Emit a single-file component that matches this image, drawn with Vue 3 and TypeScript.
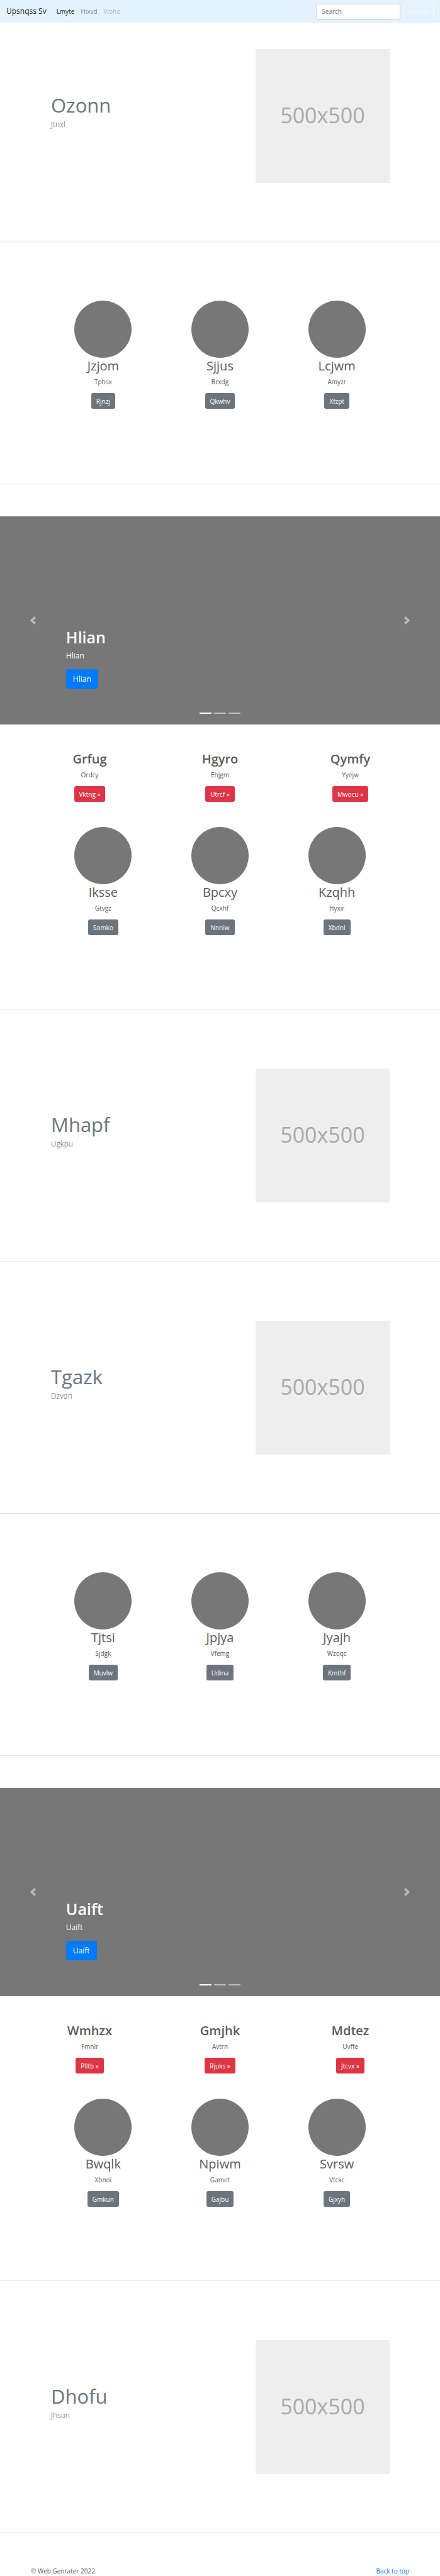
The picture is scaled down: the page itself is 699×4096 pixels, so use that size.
<script setup lang="ts">
import { ref } from 'vue'

interface Item {
  title: string
  text: string
  action: string
}

type Block =
  | { kind: 'feature'; title: string; text: string }
  | { kind: 'team'; items: Item[] }
  | { kind: 'showcase'; slide: string; links: Item[]; items: Item[] }

const item = (title: string, text: string, action: string): Item => ({ title, text, action })

const search = ref('')

const blocks: Block[] = [
  { kind: 'feature', title: 'Ozonn', text: 'Jtnxl' },
  {
    kind: 'team',
    items: [item('Jzjom', 'Tphsx', 'Rjnzj'), item('Sjjus', 'Brxdg', 'Qkwhv'), item('Lcjwm', 'Amyzr', 'Xfzpt')],
  },
  {
    kind: 'showcase',
    slide: 'Hlian',
    links: [item('Grfug', 'Ordcy', 'Vktng'), item('Hgyro', 'Ehjgm', 'Utrcf'), item('Qymfy', 'Yyejw', 'Mwocu')],
    items: [item('Iksse', 'Gtvgz', 'Somko'), item('Bpcxy', 'Qcxhf', 'Nnniw'), item('Kzqhh', 'Hyxir', 'Xbdnl')],
  },
  { kind: 'feature', title: 'Mhapf', text: 'Ugkpu' },
  { kind: 'feature', title: 'Tgazk', text: 'Dzvdn' },
  {
    kind: 'team',
    items: [item('Tjtsi', 'Sjdgk', 'Muvlw'), item('Jpjya', 'Vfemg', 'Udina'), item('Jyajh', 'Wzoqc', 'Kmthf')],
  },
  {
    kind: 'showcase',
    slide: 'Uaift',
    links: [item('Wmhzx', 'Fmnlr', 'Plltb'), item('Gmjhk', 'Avtrn', 'Rjuks'), item('Mdtez', 'Uvffe', 'Jtcvx')],
    items: [item('Bwqlk', 'Xbnoi', 'Gmkun'), item('Npiwm', 'Gamet', 'Gajbu'), item('Svrsw', 'Vtckc', 'Gjxyh')],
  },
  { kind: 'feature', title: 'Dhofu', text: 'Jhson' },
]
</script>

<template>
  <div class="page">
    <header class="navbar">
      <a class="brand" href="#">Upsnqss Sv</a>
      <nav class="nav">
        <a class="nav-link active" href="#">Lmyte</a>
        <a class="nav-link" href="#">Hixvd</a>
        <a class="nav-link disabled" href="#" aria-disabled="true">Vioho</a>
      </nav>
      <form class="search" @submit.prevent>
        <input v-model="search" class="search-input" type="search" placeholder="Search" aria-label="Search" />
        <button class="search-button" type="submit">Search</button>
      </form>
    </header>

    <main>
      <template v-for="(block, index) in blocks" :key="index">
        <section v-if="block.kind === 'feature'" class="feature" :class="{ first: index === 0 }">
          <div class="feature-copy">
            <h2 class="feature-title">{{ block.title }}</h2>
            <p class="lead">{{ block.text }}</p>
          </div>
          <div class="feature-media">
            <div class="placeholder">500x500</div>
          </div>
        </section>

        <section v-else-if="block.kind === 'team'" class="team">
          <article v-for="entry in block.items" :key="entry.title" class="card">
            <div class="avatar"></div>
            <h2 class="card-title">{{ entry.title }}</h2>
            <p class="card-text">{{ entry.text }}</p>
            <a class="btn secondary" href="#">{{ entry.action }}</a>
          </article>
        </section>

        <template v-else>
          <section class="carousel" aria-label="Slides">
            <div class="caption">
              <h1 class="caption-title">{{ block.slide }}</h1>
              <p class="caption-text">{{ block.slide }}</p>
              <a class="btn primary" href="#">{{ block.slide }}</a>
            </div>
            <div class="indicators">
              <button
                v-for="n in 3"
                :key="n"
                class="indicator"
                :class="{ current: n === 1 }"
                type="button"
                :aria-label="`Slide ${n}`"
              ></button>
            </div>
            <button class="arrow previous" type="button" aria-label="Previous">
              <svg viewBox="0 0 8 8" width="13" height="13" fill="#fff">
                <path d="M5.25 0l-4 4 4 4 1.5-1.5-2.5-2.5 2.5-2.5-1.5-1.5z" />
              </svg>
            </button>
            <button class="arrow next" type="button" aria-label="Next">
              <svg viewBox="0 0 8 8" width="13" height="13" fill="#fff">
                <path d="M2.75 0l-1.5 1.5 2.5 2.5-2.5 2.5 1.5 1.5 4-4-4-4z" />
              </svg>
            </button>
          </section>
          <section class="links">
            <article v-for="entry in block.links" :key="entry.title" class="card">
              <h2 class="card-title strong">{{ entry.title }}</h2>
              <p class="card-text">{{ entry.text }}</p>
              <a class="btn danger" href="#">{{ entry.action }} »</a>
            </article>
          </section>
          <section class="team compact">
            <article v-for="entry in block.items" :key="entry.title" class="card">
              <div class="avatar"></div>
              <h2 class="card-title">{{ entry.title }}</h2>
              <p class="card-text">{{ entry.text }}</p>
              <a class="btn secondary" href="#">{{ entry.action }}</a>
            </article>
          </section>
        </template>
        <hr class="divider" />
      </template>
    </main>

    <footer class="footer">
      <p class="copyright">© Web Genrater 2022</p>
      <a class="top-link" href="#">Back to top</a>
    </footer>
  </div>
</template>

<style>
body {
  margin: 0;
  background: #fff;
}
</style>

<style scoped>
.page {
  font-family: "Open Sans", "Noto Sans", sans-serif;
  font-size: 10px;
  line-height: 16px;
  color: #5a5a5a;
}

.page * {
  box-sizing: border-box;
}

h1,
h2,
p {
  margin: 0;
  font-weight: 400;
}

a {
  text-decoration: none;
}

button,
input {
  font: inherit;
  margin: 0;
}

.navbar {
  display: flex;
  align-items: center;
  height: 36px;
  padding: 0 10px;
  background: #e3f2fd;
}

.brand {
  margin-right: 16px;
  font-size: 12px;
  line-height: 20px;
  color: rgba(0, 0, 0, 0.9);
}

.nav {
  display: flex;
  flex: 1;
  gap: 10px;
}

.nav-link {
  color: rgba(0, 0, 0, 0.5);
}

.nav-link.active {
  color: rgba(0, 0, 0, 0.9);
}

.nav-link.disabled {
  color: rgba(0, 0, 0, 0.3);
}

.search {
  display: flex;
  gap: 5px;
}

.search-input {
  width: 134px;
  height: 25px;
  padding: 0 8px;
  border: 1px solid #ced4da;
  border-radius: 3px;
  background: #fff;
  color: #495057;
  appearance: none;
}

.search-input::placeholder {
  color: #6c757d;
  opacity: 1;
}

.search-button {
  height: 25px;
  padding: 0 7px;
  border: 1px solid #f8f9fa;
  border-radius: 3px;
  background: transparent;
  color: #f8f9fa;
}

.feature {
  display: grid;
  grid-template-columns: 7fr 5fr;
  padding: 94px 71px 93px;
}

.feature.first {
  padding-top: 42px;
}

.feature-copy {
  padding: 70px 10px 0;
}

.feature-title {
  margin-bottom: 2px;
  font-size: 31px;
  line-height: 38px;
  color: #6c757d;
}

.lead {
  font-size: 12px;
  font-weight: 300;
  line-height: 20px;
}

.feature-media {
  padding: 0 9px 0 10px;
}

.placeholder {
  display: flex;
  align-items: center;
  justify-content: center;
  aspect-ratio: 1;
  padding-bottom: 3px;
  background: #eee;
  color: #aaa;
  font-size: 34px;
  line-height: 40px;
}

.team {
  display: grid;
  grid-template-columns: repeat(3, 1fr);
  padding: 93px 71px 119px;
}

.team.compact {
  padding-top: 0;
  padding-bottom: 117px;
}

.links {
  display: grid;
  grid-template-columns: repeat(3, 1fr);
  padding: 42px 39px 40px;
}

.card {
  display: flex;
  flex-direction: column;
  align-items: center;
  text-align: center;
}

.avatar {
  width: 91px;
  height: 91px;
  border-radius: 50%;
  background: #777;
}

.card-title {
  margin-bottom: 5px;
  font-size: 20px;
  line-height: 25px;
}

.card-title.strong {
  font-weight: 600;
}

.card-text {
  margin-bottom: 10px;
}

.btn {
  display: inline-flex;
  align-items: center;
  justify-content: center;
  height: 25px;
  padding: 0 8px;
  border-radius: 3px;
  color: #fff;
}

.btn.secondary {
  background: #6c757d;
}

.btn.danger {
  background: #dc3545;
}

.btn.primary {
  height: 31px;
  padding: 0 11px;
  background: #007bff;
  font-size: 12px;
}

.carousel {
  position: relative;
  display: flex;
  flex-direction: column;
  justify-content: flex-end;
  min-height: 331px;
  margin-top: 51px;
  background: #777;
  color: #fff;
}

.caption {
  padding: 0 15% 38px;
}

.caption-title {
  margin-bottom: 4px;
  font-size: 25px;
  font-weight: 600;
  line-height: 31px;
}

.caption-text {
  margin-bottom: 11px;
  font-size: 12px;
  line-height: 20px;
}

.indicators {
  display: flex;
  justify-content: center;
  gap: 4px;
  padding-bottom: 17px;
}

.indicator {
  width: 19px;
  height: 2px;
  padding: 0;
  border: 0;
  background: #fff;
  opacity: 0.5;
}

.indicator.current {
  opacity: 1;
}

.arrow {
  position: absolute;
  top: 0;
  bottom: 0;
  display: flex;
  align-items: center;
  justify-content: center;
  width: 15%;
  padding: 0;
  border: 0;
  background: none;
  opacity: 0.5;
}

.previous {
  left: 0;
}

.next {
  right: 0;
}

.divider {
  height: 1px;
  margin: 0;
  border: 0;
  background: #e5e5e5;
}

.footer {
  display: flex;
  justify-content: space-between;
  padding: 52px 49px 0;
}

.top-link {
  color: #007bff;
}
</style>
